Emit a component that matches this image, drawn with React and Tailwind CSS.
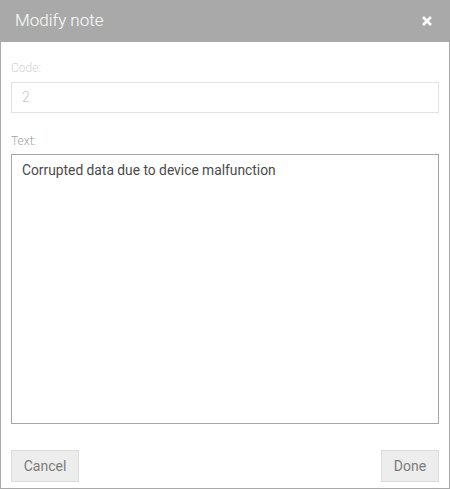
import React from "react";

export default function App() {
  return (
    <div className="w-[450px] h-[489px] bg-white flex flex-col" style={{ fontFamily: "Roboto, 'Liberation Sans', sans-serif" }}>
      <div className="h-[42px] bg-[#a9a9a9] flex items-center justify-between pl-[15px] pr-[17px] shrink-0">
        <span className="text-white text-[17px] font-light">Modify note</span>
        <svg width="12" height="12" viewBox="0 0 12 12">
          <path d="M2 2 L10 10 M10 2 L2 10" stroke="white" strokeWidth="2.6" strokeLinecap="butt" />
        </svg>
      </div>
      <div className="flex-1 border-x border-b border-[#a9a9a9] px-[10px] pt-[18px] flex flex-col">
        <label className="text-[12px] leading-[16px] text-[#d2d2d2] font-light">Code:</label>
        <div className="mt-[6px] h-[31px] border border-[#e3e3e3] flex items-center px-[10px] text-[14px] text-[#c8c8c8] font-light">2</div>
        <label className="mt-[20px] text-[12px] leading-[16px] text-[#a3a3a3] font-light">Text:</label>
        <div className="mt-[5px] h-[270px] border border-[#a6a6a6] px-[10px] pt-[5px] text-[13.8px] leading-[20px] text-[#4a4a4a]">
          Corrupted data due to device malfunction
        </div>
        <div className="mt-[26px] flex justify-between">
          <button className="h-[32px] w-[68px] bg-[#eeeded] border border-[#dcdcdc] text-[14px] text-[#7a7a7a]">Cancel</button>
          <button className="h-[32px] w-[58px] bg-[#eeeded] border border-[#dcdcdc] text-[14px] text-[#7a7a7a]">Done</button>
        </div>
      </div>
    </div>
  );
}
